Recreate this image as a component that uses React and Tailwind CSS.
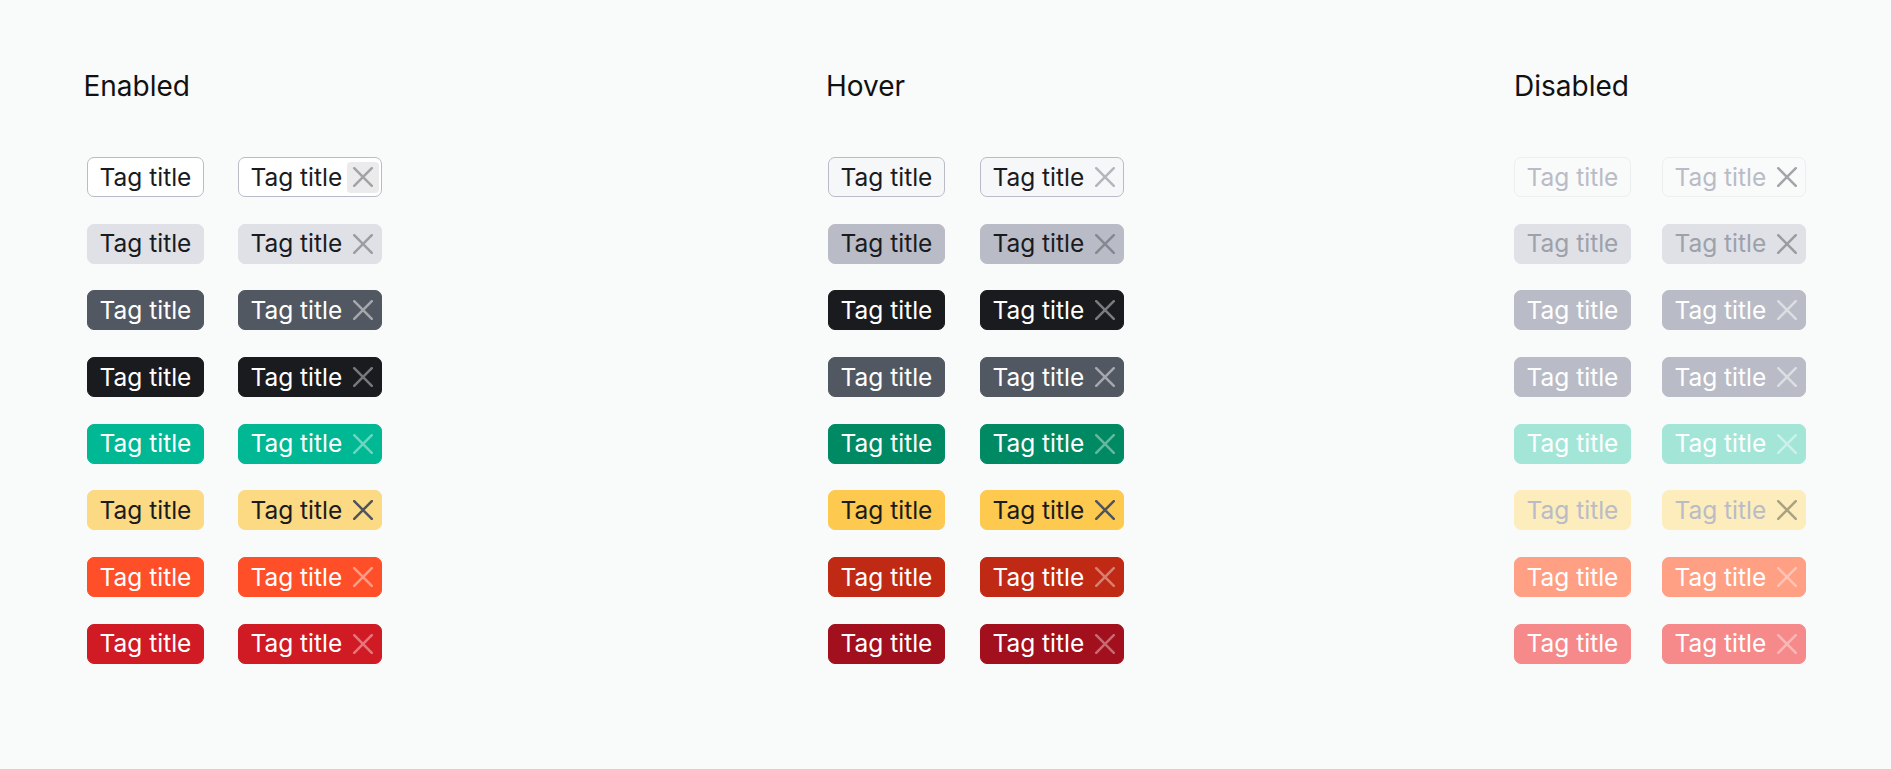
import React from 'react'

const rows = {
  enabled: [
    { tag: 'bg-white border-[#b9bcc6] text-[#1a1b1e]', x: 'text-[#a1a3a7]', btn: 'bg-[#ebebeb]' },
    { tag: 'bg-[#dfe1e6] border-[#dfe1e6] text-[#1a1b1e]', x: 'text-[#9b9da2]' },
    { tag: 'bg-[#525861] border-[#525861] text-white', x: 'text-[#a5a8ad]' },
    { tag: 'bg-[#1a1b1e] border-[#1a1b1e] text-white', x: 'text-[#77787b]' },
    { tag: 'bg-[#00b894] border-[#00b894] text-white', x: 'text-[#6cd6c0]' },
    { tag: 'bg-[#fcd983] border-[#fcd983] text-[#1a1b1e]', x: 'text-[#4e545c]' },
    { tag: 'bg-[#ff4f28] border-[#ff4f28] text-white', x: 'text-[#ff9c87]' },
    { tag: 'bg-[#d01b25] border-[#d01b25] text-white', x: 'text-[#e6767c]' },
  ],
  hover: [
    { tag: 'bg-[#f6f7f9] border-[#b9bcc6] text-[#1a1b1e]', x: 'text-[#b3b6bc]' },
    { tag: 'bg-[#b9bcc6] border-[#b9bcc6] text-[#1a1b1e]', x: 'text-[#85888f]' },
    { tag: 'bg-[#1a1b1e] border-[#1a1b1e] text-white', x: 'text-[#7b7c7e]' },
    { tag: 'bg-[#525861] border-[#525861] text-white', x: 'text-[#a5a8ad]' },
    { tag: 'bg-[#008a63] border-[#008a63] text-white', x: 'text-[#66b8a0]' },
    { tag: 'bg-[#fdc94e] border-[#fdc94e] text-[#1a1b1e]', x: 'text-[#4e545c]' },
    { tag: 'bg-[#c02a14] border-[#c02a14] text-white', x: 'text-[#d97f72]' },
    { tag: 'bg-[#a20f1d] border-[#a20f1d] text-white', x: 'text-[#c76b73]' },
  ],
  disabled: [
    { tag: 'bg-[#f9fafa] border-[#eceef0] text-[#b9bcc6]', x: 'text-[#a3a5aa]' },
    { tag: 'bg-[#dfe1e6] border-[#dfe1e6] text-[#9ca1ab]', x: 'text-[#9a9ca2]' },
    { tag: 'bg-[#b9bcc6] border-[#b9bcc6] text-white', x: 'text-[#dcdee2]' },
    { tag: 'bg-[#b9bcc6] border-[#b9bcc6] text-white', x: 'text-[#dcdee2]' },
    { tag: 'bg-[#a3e6d8] border-[#a3e6d8] text-white', x: 'text-[#cbf1e9]' },
    { tag: 'bg-[#feedbc] border-[#feedbc] text-[#b9bcc6]', x: 'text-[#a8a283]' },
    { tag: 'bg-[#ffa085] border-[#ffa085] text-white', x: 'text-[#ffc4b5]' },
    { tag: 'bg-[#f68a8b] border-[#f68a8b] text-white', x: 'text-[#f9b8b8]' },
  ],
}

const XIcon = () => (
  <svg width="20" height="20" viewBox="0 0 20 20" fill="none">
    <path d="M1.2 1.2L18.8 18.8M18.8 1.2L1.2 18.8" stroke="currentColor" strokeWidth="2.5" strokeLinecap="round" />
  </svg>
)

const Tag = ({ style, closable }) => (
  <div
    className={`flex items-center h-[40px] rounded-[7px] border-[1.5px] leading-[37px] text-[24.5px] ${style.tag} ${
      closable ? 'pl-[11.5px] pr-[1.5px]' : 'px-[11.5px]'
    }`}
  >
    <span>Tag title</span>
    {closable && (
      <span className={`ml-[5px] w-[32px] h-[31px] rounded-[4px] flex items-center justify-center ${style.x} ${style.btn || ''}`}>
        <XIcon />
      </span>
    )}
  </div>
)

const Column = ({ title, items, width, headerClass, gap }) => (
  <div className={`flex flex-col shrink-0 ${width}`}>
    <div className={`text-[28px] leading-[32px] text-[#111] ${headerClass}`}>{title}</div>
    <div className="mt-[55px] flex flex-col gap-[26.7px]">
      {items.map((s, i) => (
        <div key={i} className={`flex ${gap}`}>
          <Tag style={s} />
          <Tag style={s} closable />
        </div>
      ))}
    </div>
  </div>
)

export default function App() {
  return (
    <div
      className="w-[1891px] h-[769px] bg-[#f9fafa] flex pl-[87px] pt-[70px]"
      style={{ fontFamily: 'Inter, "Noto Sans", sans-serif' }}
    >
      <Column title="Enabled" items={rows.enabled} width="w-[741px]" headerClass="-ml-[3.5px]" gap="gap-[34px]" />
      <Column title="Hover" items={rows.hover} width="w-[686px]" headerClass="-ml-[2px]" gap="gap-[35px]" />
      <Column title="Disabled" items={rows.disabled} width="w-[350px]" headerClass="ml-0" gap="gap-[31px]" />
    </div>
  )
}
